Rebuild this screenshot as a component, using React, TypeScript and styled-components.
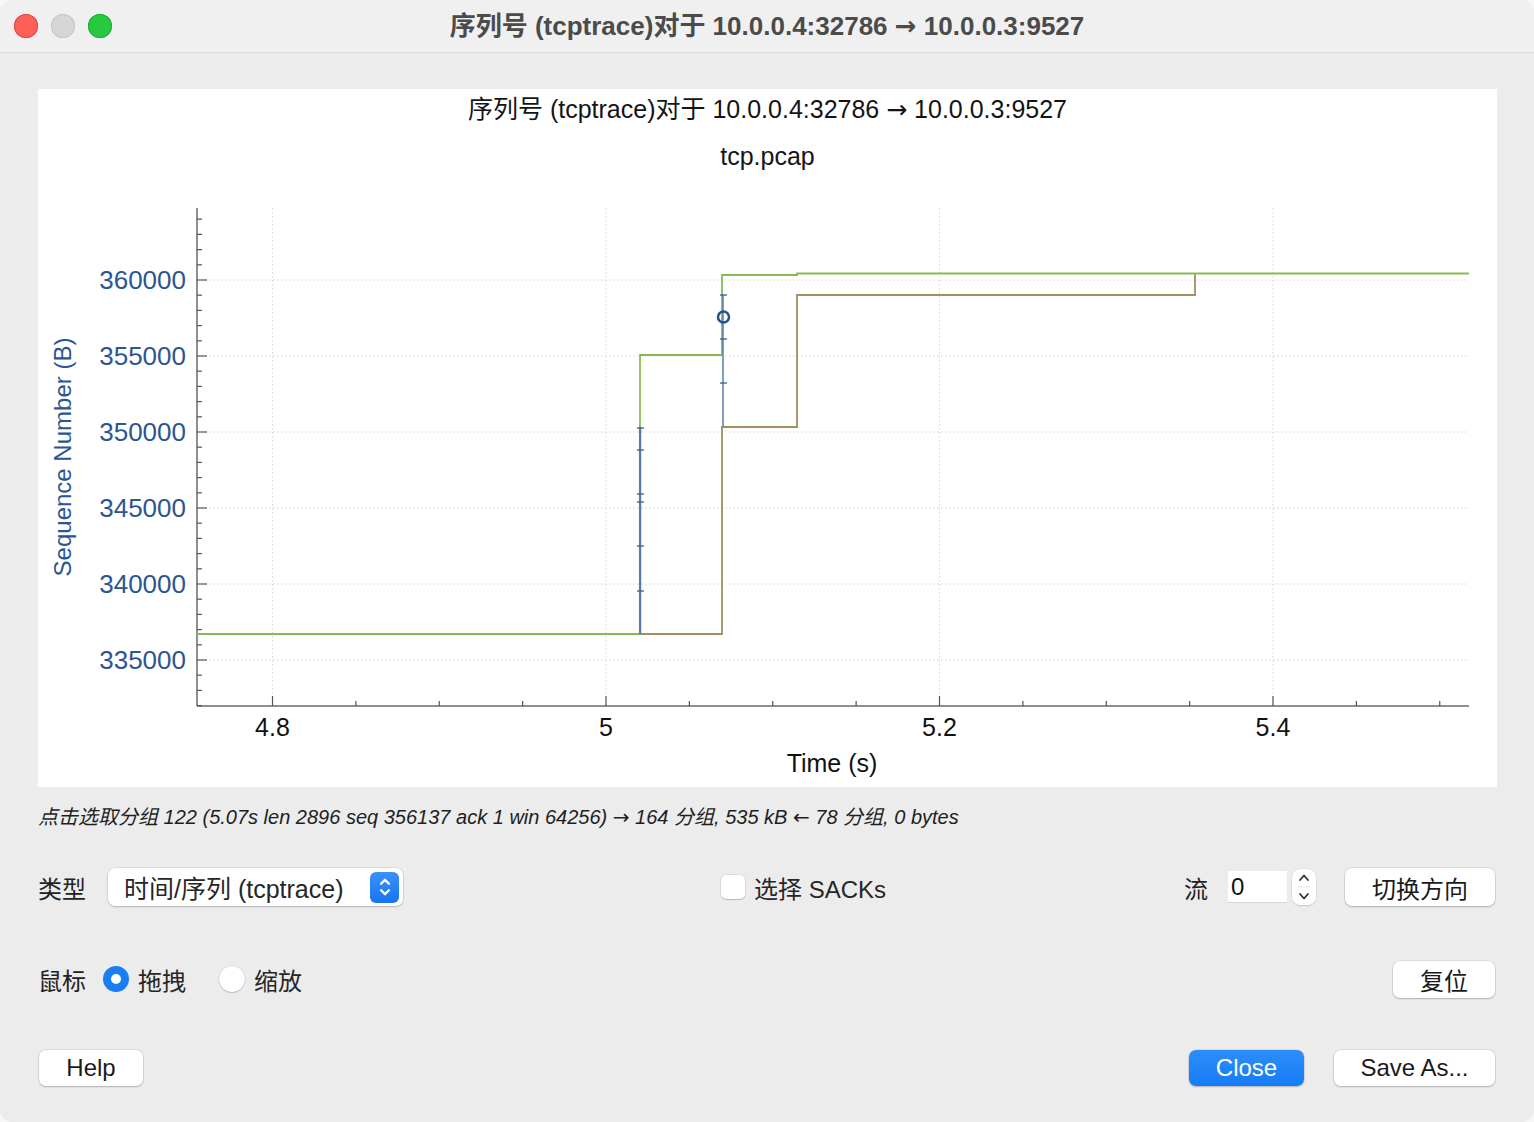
import React from 'react';
import styled, { createGlobalStyle } from 'styled-components';

const FONT = `"Liberation Sans", "Noto Sans CJK SC", sans-serif`;

const GlobalStyle = createGlobalStyle`
  body {
    margin: 0;
    background: #f7f7f7;
    font-family: ${FONT};
  }
`;

const Window = styled.div`
  width: 1534px;
  height: 1122px;
  background: #ececec;
  border-radius: 12px;
  overflow: hidden;
  display: flex;
  flex-direction: column;
`;

const TitleBar = styled.div`
  height: 52px;
  flex: none;
  background: #f1f0f0;
  border-bottom: 1px solid #d8d8d8;
  display: grid;
  grid-template-columns: 1fr auto 1fr;
  align-items: center;
`;

const Lights = styled.div`
  display: flex;
  gap: 13px;
  padding-left: 14px;
`;

const Light = styled.span<{ $c: string; $b: string }>`
  width: 24px;
  height: 24px;
  border-radius: 50%;
  background: ${(p) => p.$c};
  box-shadow: inset 0 0 0 1px ${(p) => p.$b};
`;

const WindowTitle = styled.div`
  font-size: 26px;
  font-weight: 700;
  color: #4b4b4b;
  padding-bottom: 5px;
`;

const Arrow = styled.span`
  font-family: "DejaVu Sans", sans-serif;
`;

const Content = styled.div`
  padding: 36px 37px 0 38px;
  display: flex;
  flex-direction: column;
`;

const ChartPanel = styled.div`
  height: 698px;
  background: #fff;
  display: flex;
  flex-direction: column;
`;

const ChartTitle = styled.div`
  font-size: 25px;
  line-height: 40px;
  text-align: center;
  color: #141414;
`;

const ChartSub = styled(ChartTitle)`
  margin-top: 8px;
  line-height: 36px;
`;

const Status = styled.div`
  margin-top: 18px;
  font-size: 20px;
  line-height: 24px;
  font-style: italic;
  color: #1e1e1e;
`;

const Row = styled.div<{ $top: number; $h: number }>`
  margin-top: ${(p) => p.$top}px;
  height: ${(p) => p.$h}px;
  padding-right: 2px;
  display: flex;
  align-items: center;
`;

const Label = styled.span`
  font-size: 24px;
  color: #222;
`;

const Select = styled.div`
  margin-left: 22px;
  width: 295px;
  height: 38px;
  box-sizing: border-box;
  background: #fff;
  border-radius: 7px;
  box-shadow: 0 0 0 0.5px rgba(0, 0, 0, 0.12), 0 1px 2px rgba(0, 0, 0, 0.18);
  display: flex;
  align-items: center;
  justify-content: space-between;
  padding: 0 4px 0 16px;
  font-size: 25px;
  color: #262626;
`;

const SelectStepper = styled.span`
  width: 29px;
  height: 31px;
  border-radius: 6px;
  background: linear-gradient(#3a92fb, #1674f1);
  display: flex;
  align-items: center;
  justify-content: center;
`;

const CheckGroup = styled.label`
  margin-left: 318px;
  display: flex;
  align-items: center;
  gap: 9px;
  font-size: 24px;
  color: #262626;
`;

const CheckBox = styled.span`
  width: 24px;
  height: 24px;
  box-sizing: border-box;
  border-radius: 5px;
  background: #fff;
  box-shadow: 0 0 0 0.5px rgba(0, 0, 0, 0.15), 0 1px 1px rgba(0, 0, 0, 0.15);
`;

const RightGroup = styled.div`
  margin-left: auto;
  display: flex;
  align-items: center;
`;

const SpinInput = styled.div`
  margin-left: 20px;
  width: 59px;
  height: 32px;
  box-sizing: border-box;
  background: #fff;
  border-bottom: 1px solid #d6d6d6;
  padding-left: 3px;
  font-size: 24px;
  line-height: 32px;
  color: #111;
`;

const SpinArrows = styled.span`
  margin-left: 5px;
  width: 24px;
  height: 36px;
  border-radius: 8px;
  background: #fff;
  box-shadow: 0 0 0 0.5px rgba(0, 0, 0, 0.1), 0 1px 1px rgba(0, 0, 0, 0.12);
  display: flex;
  align-items: center;
  justify-content: center;
`;

const Button = styled.button<{ $w: number; $h?: number; $primary?: boolean }>`
  width: ${(p) => p.$w}px;
  height: ${(p) => p.$h ?? 37}px;
  border: none;
  border-radius: 7px;
  font-family: ${FONT};
  font-size: 24px;
  padding: 0;
  color: ${(p) => (p.$primary ? '#fff' : '#1a1a1a')};
  background: ${(p) => (p.$primary ? 'linear-gradient(#2e8dfc, #147cf5)' : '#fff')};
  box-shadow: 0 0 0 0.5px rgba(0, 0, 0, 0.12), 0 1px 2px rgba(0, 0, 0, 0.2);
`;

const Radio = styled.span<{ $on?: boolean }>`
  width: 26px;
  height: 26px;
  box-sizing: border-box;
  border-radius: 50%;
  background: ${(p) => (p.$on ? '#1a7df6' : '#fff')};
  box-shadow: ${(p) =>
    p.$on ? 'none' : '0 0 0 0.5px rgba(0,0,0,0.15), 0 1px 1px rgba(0,0,0,0.15)'};
  display: flex;
  align-items: center;
  justify-content: center;
  &::after {
    content: '';
    width: 10px;
    height: 10px;
    border-radius: 50%;
    background: #fff;
    display: ${(p) => (p.$on ? 'block' : 'none')};
  }
`;

const RadioOption = styled.label<{ $gap: number }>`
  margin-left: ${(p) => p.$gap}px;
  display: flex;
  align-items: center;
  gap: 9px;
  font-size: 24px;
  color: #262626;
`;

const Spacer = styled.div`
  flex: 1;
`;

// chart geometry (page coordinates)
const tx = (t: number) => 606 + (t - 5) * 1667.5;
const ty = (s: number) => 660 - (s - 335000) * 0.0152;
const LEFT = 197;
const RIGHT = 1469;
const TOP = 208;
const BOTTOM = 706;

const GREEN = '#88bb55';
const BROWN = '#a48d5f';
const BLUE = '#5a7db3';

const Chart: React.FC = () => {
  const yTicks: number[] = [];
  for (let s = 332000; s <= 364000; s += 1000) yTicks.push(s);
  const xTicks: number[] = [];
  for (let i = 0; i <= 14; i++) xTicks.push(i);
  const yMajor = [335000, 340000, 345000, 350000, 355000, 360000];
  const xMajor = [
    { t: 4.8, l: '4.8' },
    { t: 5, l: '5' },
    { t: 5.2, l: '5.2' },
    { t: 5.4, l: '5.4' },
  ];
  const blueTicks1 = [428, 450, 494, 502, 546, 591];
  const blueTicks2 = [295, 339, 383];

  return (
    <svg width={1459} height={613} style={{ display: 'block' }}>
      <g transform="translate(-38,-174)" fontFamily={FONT}>
        {/* grid */}
        {yMajor.map((s) => (
          <line key={s} x1={LEFT} x2={RIGHT} y1={ty(s)} y2={ty(s)} stroke="#d4d4d4" strokeDasharray="1.5 2.5" />
        ))}
        {xMajor.map((m) => (
          <line key={m.l} x1={tx(m.t)} x2={tx(m.t)} y1={TOP} y2={BOTTOM} stroke="#d4d4d4" strokeDasharray="1.5 2.5" />
        ))}

        {/* axes */}
        <line x1={LEFT} x2={LEFT} y1={TOP} y2={BOTTOM} stroke="#6a6a6a" strokeWidth={1.5} />
        <line x1={LEFT} x2={RIGHT} y1={BOTTOM} y2={BOTTOM} stroke="#6a6a6a" strokeWidth={1.5} />
        {yTicks.map((s) => (
          <line
            key={s}
            x1={LEFT}
            x2={LEFT + (s % 5000 === 0 ? 10 : 5)}
            y1={ty(s)}
            y2={ty(s)}
            stroke="#555"
            strokeWidth={1.2}
          />
        ))}
        {xTicks.map((i) => {
          const x = tx(4.8 + 0.05 * i);
          return (
            <line key={i} x1={x} x2={x} y1={BOTTOM} y2={BOTTOM - (i % 4 === 0 ? 10 : 5)} stroke="#555" strokeWidth={1.2} />
          );
        })}

        {/* tick labels */}
        {yMajor.map((s) => (
          <text key={s} x={186} y={ty(s)} textAnchor="end" dominantBaseline="central" fontSize={26} fill="#2c5591">
            {s}
          </text>
        ))}
        {xMajor.map((m) => (
          <text key={m.l} x={tx(m.t)} y={727} textAnchor="middle" dominantBaseline="central" fontSize={25} fill="#111">
            {m.l}
          </text>
        ))}
        <text x={832} y={763} textAnchor="middle" dominantBaseline="central" fontSize={25} fill="#111">
          Time (s)
        </text>
        <text
          transform="translate(71,457) rotate(-90)"
          textAnchor="middle"
          fontSize={24}
          fill="#2c5591"
        >
          Sequence Number (B)
        </text>

        {/* series */}
        <path d="M640 634 H722 V427 H797 V295 H1195 V273" fill="none" stroke={BROWN} strokeWidth={1.8} />
        <path d={`M${LEFT} 634 H640 V355 H722 V275 H797 V273.5 H${RIGHT}`} fill="none" stroke={GREEN} strokeWidth={1.8} />
        <path d="M640.5 427 V634 M723 295 V427" fill="none" stroke={BLUE} strokeWidth={1.5} />
        <path d="M639.5 427 V634" fill="none" stroke="#3f6b6a" strokeWidth={1.2} opacity={0.6} />
        {blueTicks1.map((y) => (
          <line key={y} x1={637} x2={644} y1={y} y2={y} stroke="#3c5f86" strokeWidth={1.3} />
        ))}
        {blueTicks2.map((y) => (
          <line key={y} x1={720} x2={727} y1={y} y2={y} stroke="#3c5f86" strokeWidth={1.3} />
        ))}
        <circle cx={723.5} cy={317} r={5.5} fill="none" stroke="#24508f" strokeWidth={2.5} />
      </g>
    </svg>
  );
};

const SelectChevrons: React.FC = () => (
  <svg width={16} height={26} viewBox="0 0 12 20">
    <path d="M3 7.5 L6 4.5 L9 7.5 M3 12.5 L6 15.5 L9 12.5" fill="none" stroke="#fff" strokeWidth={1.8} strokeLinecap="round" strokeLinejoin="round" />
  </svg>
);

const SpinChevrons: React.FC = () => (
  <svg width={16} height={36} viewBox="0 0 16 36">
    <path d="M4 11 L8 6.5 L12 11 M4 25 L8 29.5 L12 25" fill="none" stroke="#333" strokeWidth={1.8} strokeLinecap="round" strokeLinejoin="round" />
    <line x1={2} x2={14} y1={18} y2={18} stroke="#e2e2e2" strokeWidth={1} />
  </svg>
);

const App: React.FC = () => {
  return (
    <>
      <GlobalStyle />
      <Window>
        <TitleBar>
          <Lights>
            <Light $c="#fe5f57" $b="#e2463f" />
            <Light $c="#d6d6d6" $b="#c4c4c4" />
            <Light $c="#28c840" $b="#1eab30" />
          </Lights>
          <WindowTitle>
            序列号 (tcptrace)对于 10.0.0.4:32786 <Arrow>→</Arrow> 10.0.0.3:9527
          </WindowTitle>
          <div />
        </TitleBar>

        <Content>
          <ChartPanel>
            <ChartTitle>
              序列号 (tcptrace)对于 10.0.0.4:32786 <Arrow>→</Arrow> 10.0.0.3:9527
            </ChartTitle>
            <ChartSub>tcp.pcap</ChartSub>
            <Chart />
          </ChartPanel>

          <Status>
            点击选取分组 122 (5.07s len 2896 seq 356137 ack 1 win 64256) <Arrow>→</Arrow> 164 分组, 535 kB{' '}
            <Arrow>←</Arrow> 78 分组, 0 bytes
          </Status>

          <Row $top={38} $h={40}>
            <Label>类型</Label>
            <Select>
              <span>时间/序列 (tcptrace)</span>
              <SelectStepper>
                <SelectChevrons />
              </SelectStepper>
            </Select>
            <CheckGroup>
              <CheckBox />
              选择 SACKs
            </CheckGroup>
            <RightGroup>
              <Label>流</Label>
              <SpinInput>0</SpinInput>
              <SpinArrows>
                <SpinChevrons />
              </SpinArrows>
              <Button $w={150} $h={38} style={{ marginLeft: 29 }}>
                切换方向
              </Button>
            </RightGroup>
          </Row>

          <Row $top={53} $h={38}>
            <Label>鼠标</Label>
            <RadioOption $gap={17}>
              <Radio $on />
              拖拽
            </RadioOption>
            <RadioOption $gap={33}>
              <Radio />
              缩放
            </RadioOption>
            <Spacer />
            <Button $w={102}>复位</Button>
          </Row>

          <Row $top={52} $h={36}>
            <Button $w={104} $h={36} style={{ marginLeft: 1 }}>
              Help
            </Button>
            <Spacer />
            <Button $w={115} $h={36} $primary>
              Close
            </Button>
            <Button $w={161} $h={36} style={{ marginLeft: 30 }}>
              Save As...
            </Button>
          </Row>
        </Content>
      </Window>
    </>
  );
};

export default App;
